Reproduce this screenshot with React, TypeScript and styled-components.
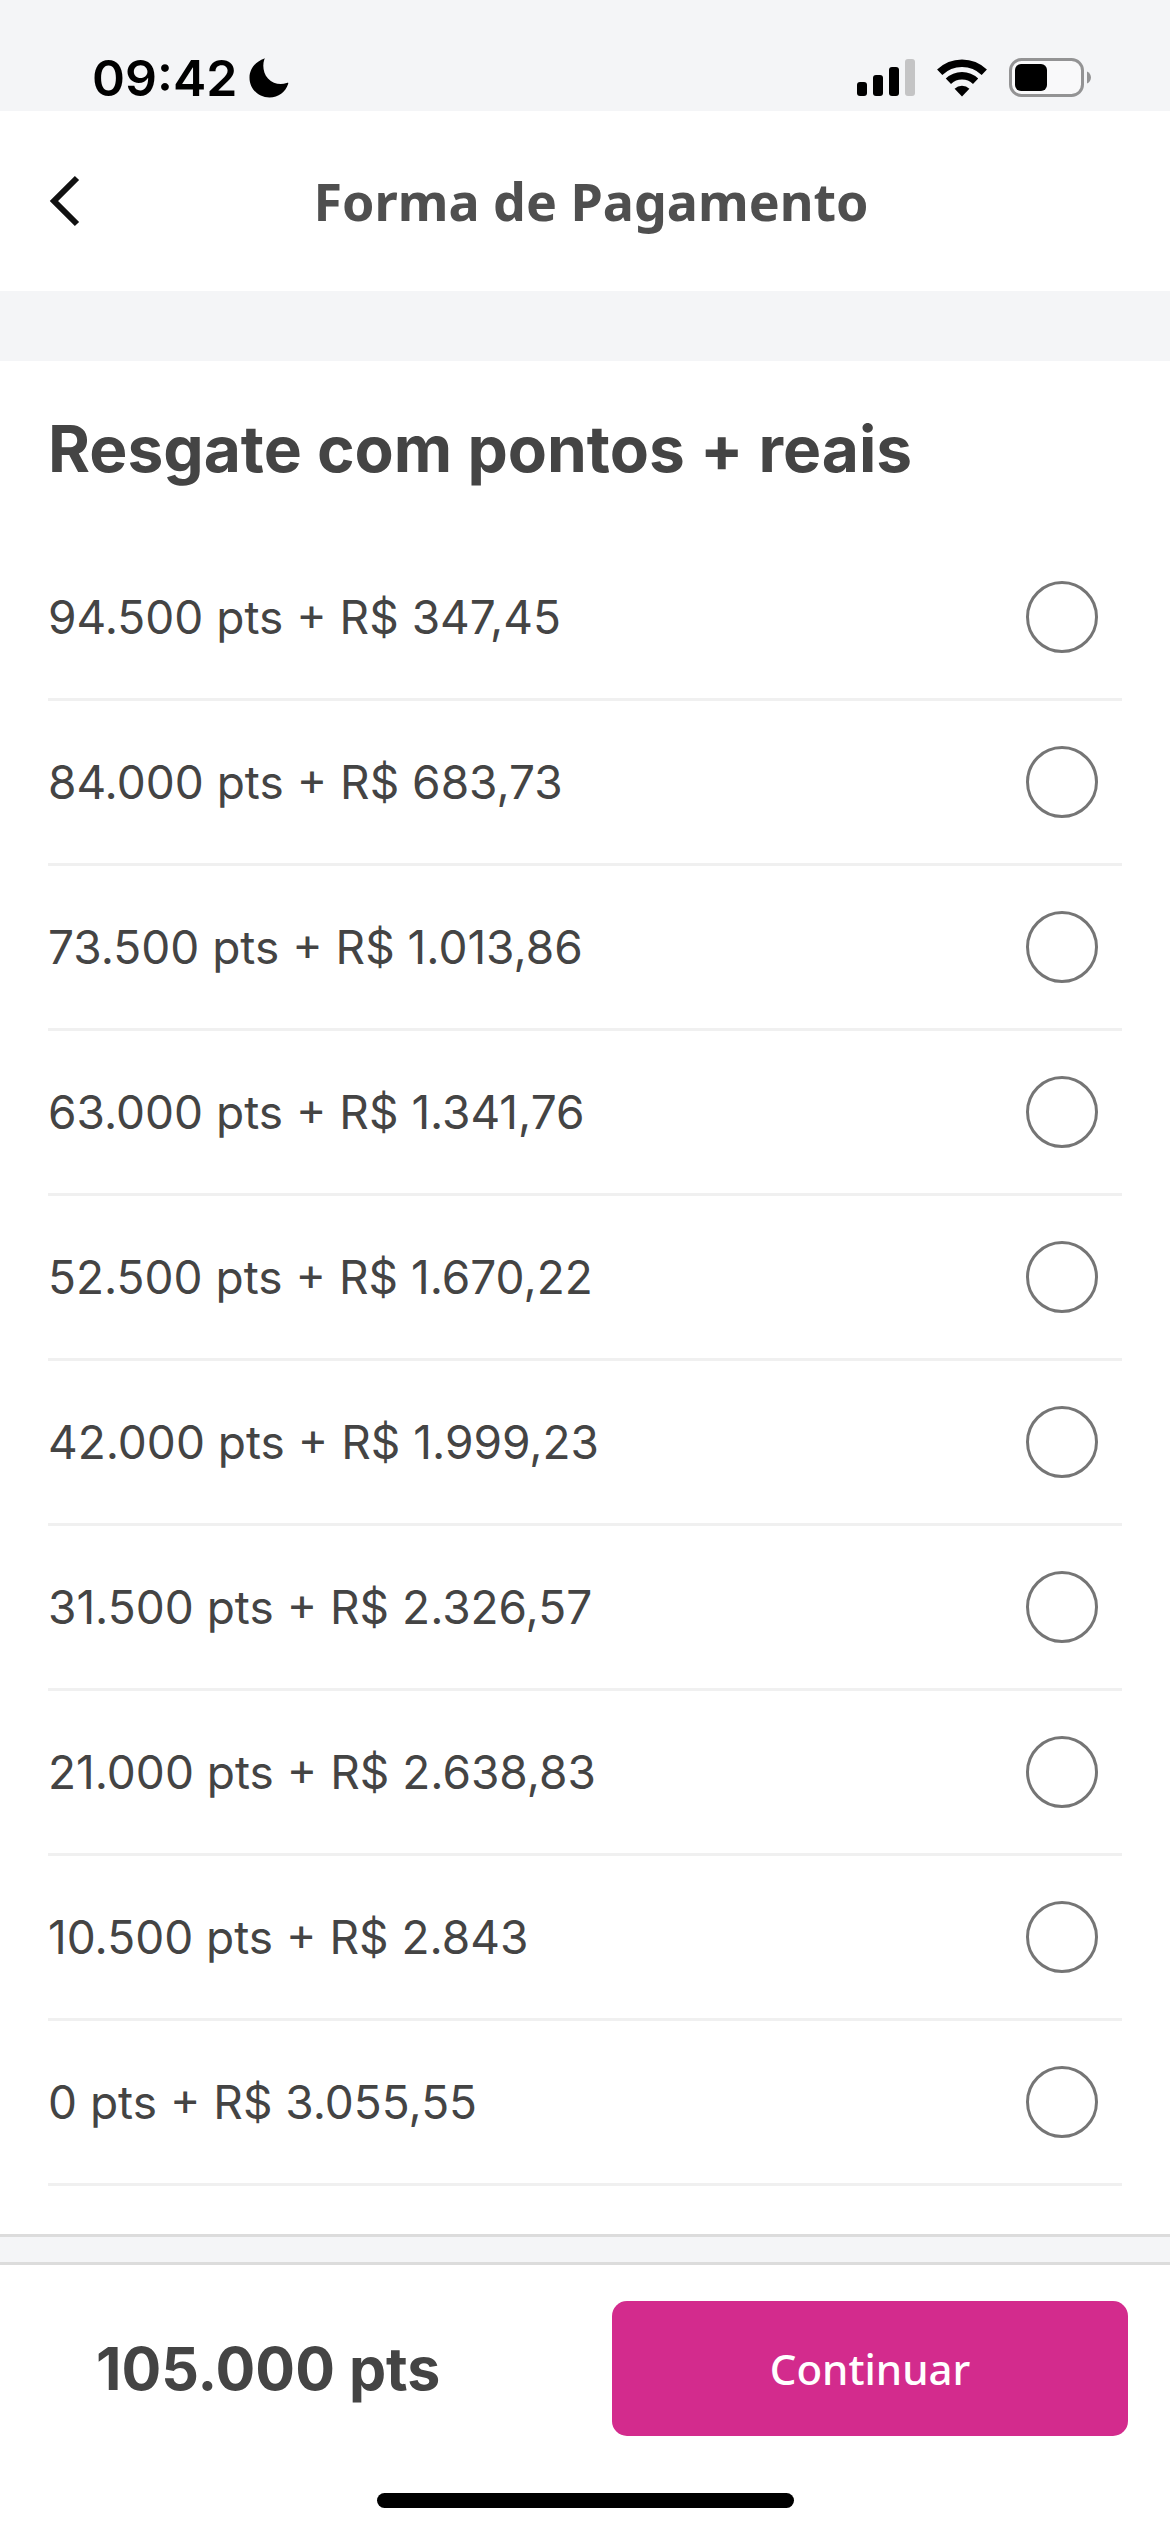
import React, { useState } from "react";
import styled, { createGlobalStyle } from "styled-components";

const colors = {
  surface: "#ffffff",
  canvas: "#f4f5f7",
  text: "#444444",
  heading: "#4f4f4f",
  outline: "#757575",
  line: "#f0f0f0",
  rule: "#dcdcdc",
  brand: "#d32b8d",
};

const uiFont = `Inter, Roboto, "Liberation Sans", sans-serif`;
const brandFont = `"Noto Sans", "Open Sans", sans-serif`;

const GlobalStyle = createGlobalStyle`
  *, *::before, *::after { box-sizing: border-box; }
  body {
    margin: 0;
    background: ${colors.surface};
    color: ${colors.text};
    font-family: ${uiFont};
  }
`;

const Screen = styled.div`
  display: flex;
  flex-direction: column;
  min-height: 100vh;
`;

const StatusBar = styled.div`
  display: flex;
  justify-content: space-between;
  align-items: center;
  padding: 45px 78px 0 92px;
  background: ${colors.canvas};
  color: #000;
`;

const StatusGroup = styled.div<{ $gap: number }>`
  display: flex;
  align-items: center;
  gap: ${({ $gap }) => $gap}px;
  height: 66px;
`;

const Clock = styled.time`
  font-size: 50px;
  font-weight: 600;
  line-height: 66px;
`;

const Header = styled.header`
  display: grid;
  grid-template-columns: 96px 1fr 84px;
  align-items: center;
  height: 180px;
  background: ${colors.surface};
`;

const BackButton = styled.button`
  display: flex;
  align-items: center;
  height: 96px;
  padding: 0 0 0 48px;
  border: 0;
  background: none;
  color: #111;
  cursor: pointer;
`;

const HeaderTitle = styled.h1`
  margin: 0;
  text-align: center;
  color: ${colors.heading};
  font-family: ${brandFont};
  font-size: 52px;
  font-weight: 700;
  line-height: 72px;
`;

const Spacer = styled.div`
  height: 70px;
  background: ${colors.canvas};
`;

const Options = styled.main`
  flex: 1;
  padding: 48px 48px 48px;
`;

const OptionGroup = styled.fieldset`
  margin: 0;
  padding: 0;
  border: 0;
  min-width: 0;
`;

const GroupTitle = styled.legend`
  padding: 0 0 47px;
  font-size: 64px;
  font-weight: 700;
  line-height: 80px;
`;

const OptionRow = styled.label`
  display: flex;
  justify-content: space-between;
  align-items: center;
  height: 165px;
  padding-right: 24px;
  border-bottom: 3px solid ${colors.line};
  font-size: 46px;
  line-height: 60px;
  cursor: pointer;
`;

const Radio = styled.input`
  appearance: none;
  flex: none;
  width: 72px;
  height: 72px;
  margin: 0;
  border: 3px solid ${colors.outline};
  border-radius: 50%;
  cursor: pointer;

  &:checked {
    border: 21px solid ${colors.brand};
  }
`;

const Divider = styled.div`
  height: 31px;
  border-top: 3px solid ${colors.rule};
  border-bottom: 3px solid ${colors.rule};
  background: ${colors.canvas};
`;

const Footer = styled.footer`
  display: grid;
  grid-template-columns: 1fr 516px;
  align-items: center;
  padding: 36px 42px 57px 96px;
  background: ${colors.surface};
`;

const Total = styled.strong`
  font-size: 59px;
  font-weight: 700;
  line-height: 72px;
`;

const ContinueButton = styled.button`
  height: 135px;
  border: 0;
  border-radius: 15px;
  background: ${colors.brand};
  color: #fff;
  font-family: ${brandFont};
  font-size: 42px;
  font-weight: 500;
  line-height: 60px;
  cursor: pointer;
`;

const HomeArea = styled.div`
  display: flex;
  justify-content: center;
  padding-bottom: 24px;
`;

const HomeIndicator = styled.div`
  width: 417px;
  height: 15px;
  border-radius: 8px;
  background: #000;
`;

const MoonIcon = () => (
  <svg width="40" height="40" viewBox="0 0 40 40" aria-hidden="true">
    <path
      d="M15.4 0.4C16 0.1 15.6 0.8 15.3 1.6C13.4 7 14 15 19 20.6C24 26 31.500 27.200 37.600 25.100C38.600 24.700 39.600 24.600 39.200 25.700C36.500 34 29.500 39.500 20.500 39.500C9.500 39.500 0.500 31 0.500 19.800C0.500 11 6.500 3.500 15.400 0.400Z"
      fill="currentColor"
    />
  </svg>
);

const SignalIcon = () => (
  <svg width="58" height="38" viewBox="0 0 58 38" aria-hidden="true">
    <rect x="0" y="23" width="10" height="14" rx="3" fill="currentColor" />
    <rect x="16" y="16" width="10" height="21" rx="3" fill="currentColor" />
    <rect x="32" y="8" width="10" height="29" rx="3" fill="currentColor" />
    <rect x="48" y="0" width="10" height="37" rx="3" fill="#c4c4c5" />
  </svg>
);

const WifiIcon = () => (
  <svg width="50" height="38" viewBox="0 0 50 38" aria-hidden="true">
    <g fill="none" stroke="currentColor" strokeWidth="7.500">
      <path d="M2.700 13.200A32 32 0 0 1 47.300 13.200" />
      <path d="M11.400 22.300A19.500 19.500 0 0 1 38.600 22.300" />
    </g>
    <path d="M25 37.500L17.600 29.800A10.800 10.800 0 0 1 32.400 29.800Z" fill="currentColor" />
  </svg>
);

const BatteryIcon = () => (
  <svg width="83" height="40" viewBox="0 0 83 40" aria-hidden="true">
    <rect x="1.500" y="1.500" width="72" height="36" rx="11" fill="#f9f9fa" stroke="#939394" strokeWidth="3" />
    <rect x="6" y="6" width="32" height="27" rx="6" fill="currentColor" />
    <path d="M78 13.500C83.300 15.500 83.300 23.500 78 25.500Z" fill="#939394" />
  </svg>
);

const ChevronLeft = () => (
  <svg width="34" height="52" viewBox="0 0 34 52" aria-hidden="true">
    <path d="M29 3L6 26L29 49" fill="none" stroke="currentColor" strokeWidth="6" />
  </svg>
);

const options = [
  { points: "94.500", cash: "347,45" },
  { points: "84.000", cash: "683,73" },
  { points: "73.500", cash: "1.013,86" },
  { points: "63.000", cash: "1.341,76" },
  { points: "52.500", cash: "1.670,22" },
  { points: "42.000", cash: "1.999,23" },
  { points: "31.500", cash: "2.326,57" },
  { points: "21.000", cash: "2.638,83" },
  { points: "10.500", cash: "2.843" },
  { points: "0", cash: "3.055,55" },
];

export default function App() {
  const [selected, setSelected] = useState<string | null>(null);

  return (
    <Screen>
      <GlobalStyle />
      <StatusBar>
        <StatusGroup $gap={12}>
          <Clock>09:42</Clock>
          <MoonIcon />
        </StatusGroup>
        <StatusGroup $gap={22}>
          <SignalIcon />
          <WifiIcon />
          <BatteryIcon />
        </StatusGroup>
      </StatusBar>
      <Header>
        <BackButton type="button" aria-label="Voltar">
          <ChevronLeft />
        </BackButton>
        <HeaderTitle>Forma de Pagamento</HeaderTitle>
      </Header>
      <Spacer />
      <Options>
        <OptionGroup>
          <GroupTitle>Resgate com pontos + reais</GroupTitle>
          {options.map(({ points, cash }) => (
            <OptionRow key={points}>
              {`${points} pts + R$ ${cash}`}
              <Radio
                type="radio"
                name="forma-de-pagamento"
                value={points}
                checked={selected === points}
                onChange={() => setSelected(points)}
              />
            </OptionRow>
          ))}
        </OptionGroup>
      </Options>
      <Divider />
      <Footer>
        <Total>105.000 pts</Total>
        <ContinueButton type="button">Continuar</ContinueButton>
      </Footer>
      <HomeArea>
        <HomeIndicator />
      </HomeArea>
    </Screen>
  );
}
